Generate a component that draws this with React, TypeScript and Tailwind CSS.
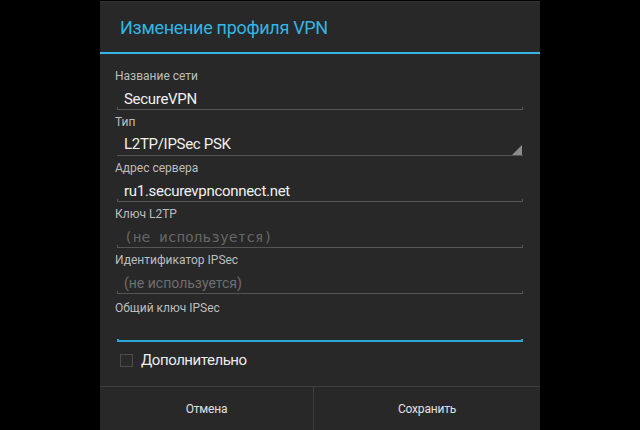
import React from "react";

const font = { fontFamily: "Roboto, 'Noto Sans', sans-serif" };

function Underline({ focused }: { focused?: boolean }) {
  if (focused) {
    return <div className="h-[3px] border-x-2 border-b-2 border-[#2aa6d8] w-[406px] ml-[2px]" />;
  }
  return <div className="h-[3px] border-x border-b border-[#555555] w-[406px] ml-[2px]" />;
}

function Field({
  label,
  value,
  hint,
  mono,
  focused,
  spinner,
}: {
  label: string;
  value?: string;
  hint?: string;
  mono?: boolean;
  focused?: boolean;
  spinner?: boolean;
}) {
  return (
    <div className="flex flex-col">
      <div className="h-[16px] leading-[16px] text-[12px] text-[#bdbdbd]">{label}</div>
      <div className="h-[26px] flex flex-col justify-end w-[408px]">
        <div className="flex items-end justify-between">
          <div
            className={
              spinner
                ? "h-[16px] leading-[16px] flex items-center pl-[9px] mb-[3px] whitespace-nowrap"
                : "h-[16px] leading-[16px] flex items-center pl-[9px] whitespace-nowrap"
            }
          >
            {value && <span className="text-[15px] tracking-[-0.3px] text-[#f0f0f0]">{value}</span>}
            {hint && (
              <span
                className={mono ? "text-[14.5px] text-[#666666]" : "text-[14px] text-[#6e6e6e]"}
                style={mono ? { fontFamily: "'DejaVu Sans Mono', monospace" } : undefined}
              >
                {hint}
              </span>
            )}
          </div>
          {spinner && (
            <svg width="10" height="10" viewBox="0 0 10 10" className="mr-[1px]">
              <polygon points="10,0 10,10 0,10" fill="#8c8c8c" />
            </svg>
          )}
        </div>
        {spinner ? (
          <div className="h-[1px] bg-[#555555] w-[406px] ml-[2px]" />
        ) : (
          <Underline focused={focused} />
        )}
      </div>
      <div className="h-[4px]" />
    </div>
  );
}

export default function App() {
  return (
    <div className="w-[640px] h-[430px] bg-[#000000] flex justify-center overflow-hidden" style={font}>
      <div className="w-[440px] mt-[1px] bg-[#282828] flex flex-col border-t border-[#333333]">
        <div className="h-[50px] flex items-center pl-[20px] text-[18px] tracking-[-0.3px] text-[#33b5e5]">
          Изменение профиля VPN
        </div>
        <div className="h-[2px] bg-[#33b5e5]" />
        <div className="flex flex-col pl-[15px] pt-[14px]">
          <Field label="Название сети" value="SecureVPN" />
          <Field label="Тип" value="L2TP/IPSec PSK" spinner />
          <Field label="Адрес сервера" value="ru1.securevpnconnect.net" />
          <Field label="Ключ L2TP" hint="(не используется)" mono />
          <Field label="Идентификатор IPSec" hint="(не используется)" />
          <div className="pt-[2px]">
            <Field label="Общий ключ IPSec" focused />
          </div>
          <div className="flex items-center h-[30px] pl-[5px] -mt-[1px]">
            <div className="w-[13px] h-[13px] border border-[#4d4d4d] bg-[#2a2a2a]" />
            <span className="ml-[8px] text-[15px] tracking-[-0.45px] text-[#ececec]">Дополнительно</span>
          </div>
        </div>
        <div className="flex-1" />
        <div className="h-[44px] border-t border-[#3e3e3e] flex text-[12px] tracking-[-0.2px] text-[#e0e0e0]">
          <div className="w-[214px] flex items-center justify-center border-r border-[#3e3e3e]">Отмена</div>
          <div className="flex-1 flex items-center justify-center">Сохранить</div>
        </div>
      </div>
    </div>
  );
}
